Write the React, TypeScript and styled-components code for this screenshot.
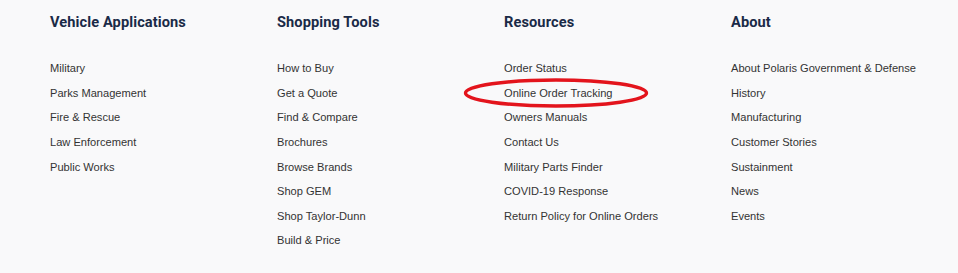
import React from 'react';
import styled, {createGlobalStyle} from 'styled-components';

const columns = [
  {
    title: 'Vehicle Applications',
    links: ['Military', 'Parks Management', 'Fire & Rescue', 'Law Enforcement', 'Public Works'],
  },
  {
    title: 'Shopping Tools',
    links: [
      'How to Buy',
      'Get a Quote',
      'Find & Compare',
      'Brochures',
      'Browse Brands',
      'Shop GEM',
      'Shop Taylor-Dunn',
      'Build & Price',
    ],
  },
  {
    title: 'Resources',
    links: [
      'Order Status',
      'Online Order Tracking',
      'Owners Manuals',
      'Contact Us',
      'Military Parts Finder',
      'COVID-19 Response',
      'Return Policy for Online Orders',
    ],
    circled: 'Online Order Tracking',
  },
  {
    title: 'About',
    links: [
      'About Polaris Government & Defense',
      'History',
      'Manufacturing',
      'Customer Stories',
      'Sustainment',
      'News',
      'Events',
    ],
  },
];

const App = () => (
  <>
    <GlobalStyle />
    <Footer>
      {columns.map((col) => (
        <Column key={col.title}>
          <Heading>{col.title}</Heading>
          <LinkList>
            {col.links.map((link) => (
              <LinkItem key={link}>
                <FooterLink href="#">{link}</FooterLink>
                {col.circled === link && (
                  <Circle viewBox="0 0 186 30" preserveAspectRatio="none">
                    <ellipse cx="93" cy="15" rx="90.5" ry="13" fill="none" stroke="#e3141c" strokeWidth="3.4" />
                  </Circle>
                )}
              </LinkItem>
            ))}
          </LinkList>
        </Column>
      ))}
    </Footer>
  </>
);

const GlobalStyle = createGlobalStyle`
  body {
    margin: 0;
    background: #f9f9fa;
  }
`;

const Footer = styled.div`
  display: grid;
  grid-template-columns: repeat(4, 227px);
  padding: 12px 0 0 50px;
  height: 273px;
  box-sizing: border-box;
  background: #f9f9fa;
`;

const Column = styled.div`
  display: flex;
  flex-direction: column;
`;

const Heading = styled.h3`
  margin: 0;
  font-family: 'Roboto', 'Liberation Sans', sans-serif;
  font-weight: 700;
  font-size: 14.6px;
  line-height: 20px;
  color: #1a2a47;
  letter-spacing: 0.1px;
`;

const LinkList = styled.ul`
  list-style: none;
  margin: 24px 0 0;
  padding: 0;
  display: flex;
  flex-direction: column;
`;

const LinkItem = styled.li`
  position: relative;
  height: 24.6px;
  display: flex;
  align-items: center;
`;

const FooterLink = styled.a`
  font-family: 'Liberation Sans', Arial, sans-serif;
  font-size: 11.1px;
  color: #333;
  text-decoration: none;
`;

const Circle = styled.svg`
  position: absolute;
  left: -41px;
  top: 50%;
  transform: translateY(-50%);
  width: 186px;
  height: 30px;
  pointer-events: none;
  overflow: visible;
`;

export default App;
